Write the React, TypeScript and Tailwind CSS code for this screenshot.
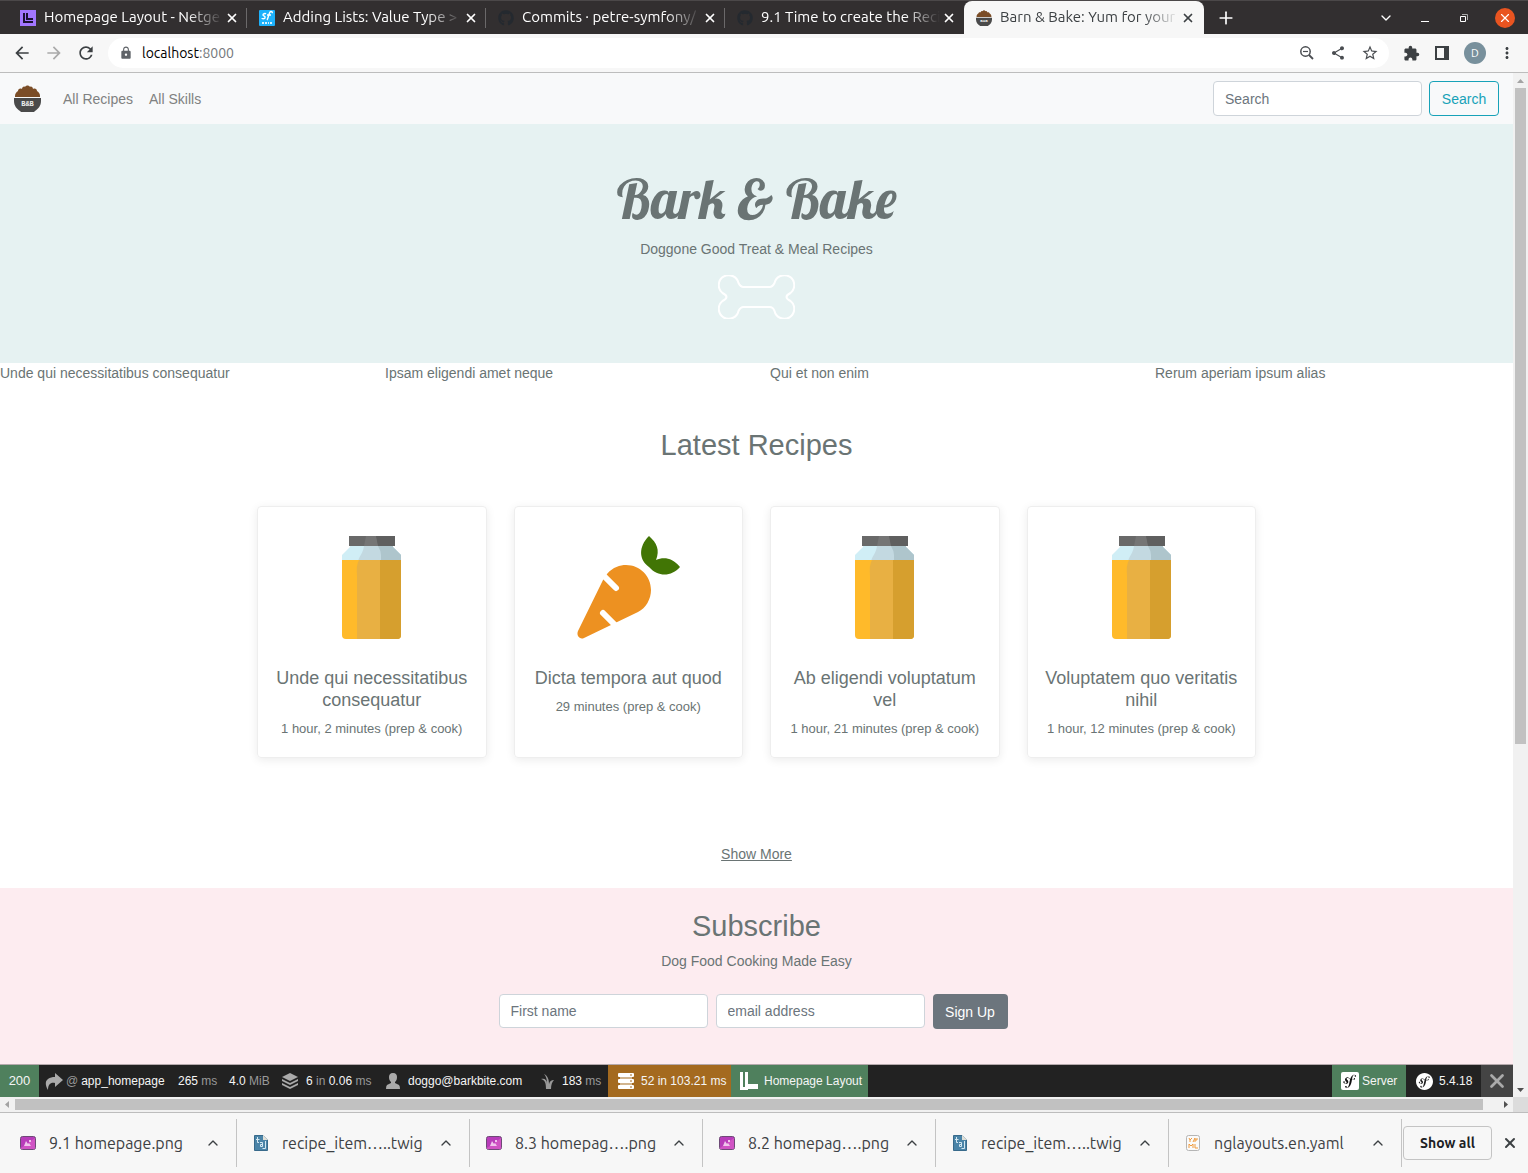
import type { ReactNode } from "react";
import {
  MdArrowBack,
  MdArrowForward,
  MdExtension,
  MdLock,
  MdMoreVert,
  MdRefresh,
  MdShare,
  MdStarBorder,
} from "react-icons/md";
import { FaGithub } from "react-icons/fa";
import { SiSymfony } from "react-icons/si";
import { ChevronDown, ChevronUp, Plus, X } from "lucide-react";

function BowlIcon({ className }: { className: string }) {
  return (
    <svg viewBox="0 0 27 27" className={className} aria-hidden="true">
      <path
        d="M1 11C1 9 2 7 4 6C4 4 6 3 8 4C8 2 10 1 11 2C12 0 15 0 16 2C17 1 19 2 19 4C21 3 23 4 23 6C25 7 26 9 26 11V12H1Z"
        fill="#7b4d27"
      />
      <path d="M0 13H27V16C27 21 24 24 21 26L20 27H7L6 26C3 24 0 21 0 16Z" fill="#4a4a4a" />
      <text
        x="13.5"
        y="21"
        textAnchor="middle"
        fontSize="7"
        fontWeight="700"
        fontFamily="Liberation Mono, monospace"
        fill="#eee"
      >
        B&amp;B
      </text>
    </svg>
  );
}

function LayoutsIcon() {
  return (
    <svg viewBox="0 0 16 16" className="size-4 shrink-0" aria-hidden="true">
      <rect width="16" height="16" fill="#a276ff" />
      <path d="M3 3H5V11H13V13H3Z M6 3H8V8H13V10H6Z" fill="#1b1033" />
    </svg>
  );
}

function CastsIcon() {
  return (
    <svg viewBox="0 0 16 16" className="size-4 shrink-0" aria-hidden="true">
      <rect width="16" height="16" rx="1" fill="#1db1fb" />
      <path
        d="M7 4C6 3 4 4 4 5C4 6 7 6 6 8C5 9 3 9 3 8M8 10C9 9 10 3 11 2C12 1 14 2 13 3M8 5H12"
        fill="none"
        stroke="#fff"
        strokeWidth="1.4"
      />
      <path d="M3 13H5M6 13H8M9 13H10M11 13H13" stroke="#d5f1ff" strokeWidth="2" />
    </svg>
  );
}

function ZoomOutIcon() {
  return (
    <svg viewBox="0 0 16 16" className="size-4" fill="none" stroke="currentColor" aria-hidden="true">
      <circle cx="6.500" cy="6.500" r="4.700" strokeWidth="1.5" />
      <path d="M4 6.500H9" strokeWidth="1.2" />
      <path d="M10 10L14 14" strokeWidth="1.8" />
    </svg>
  );
}

function JarIcon() {
  return (
    <svg viewBox="0 0 59 103" className="h-[103px] w-[59px]" aria-hidden="true">
      <path d="M8 10H51V11L59 19V25H0V19L8 11Z" fill="#d0eef6" />
      <path d="M22 10H51V11L59 19V25H16C18 19 21 17 22 10Z" fill="#c3d9e1" />
      <path d="M36 10H51V11L59 19V25H39V19Q39 15 36 10Z" fill="#aec5cc" />
      <path d="M0 24H59V99Q59 103 55 103H4Q0 103 0 99Z" fill="#ffba2a" />
      <path d="M17 24H59V99Q59 103 55 103H15V40Q14 29 17 24Z" fill="#e8b043" />
      <path d="M38 24H59V99Q59 103 55 103H38Z" fill="#d69f2e" />
      <path d="M7 0H53V10H7Z" fill="#696969" />
      <path d="M24 0H53V10H22Z" fill="#757575" />
      <path d="M34 0H53V10H36Z" fill="#5f5f5f" />
    </svg>
  );
}

function CarrotIcon() {
  return (
    <svg viewBox="0 0 103 103" className="size-[103px]" aria-hidden="true">
      <path
        d="M30 38C36 31 43 29 49 29C63 29 74 40 74 54C74 63 69 72 61 76L7 102C3 104 -1 100 1 95L26 44Z"
        fill="#ed9121"
      />
      <path d="M26 39L39 52M26 77L38 89" stroke="#fff" strokeWidth="6" strokeLinecap="round" />
      <path
        d="M72 0C61 11 62 24 72 31C82 42 95 40 103 31C95 21 86 21 79 24C83 14 80 7 72 0Z"
        fill="#417505"
      />
    </svg>
  );
}

function BoneIcon() {
  return (
    <svg viewBox="0 0 76 44" className="h-11 w-[77px]" aria-hidden="true">
      <path
        d="M25 12H51C54 12 55 10 56 8A10 10 0 1 1 72 18Q68 20 68 22Q68 24 72 26A10 10 0 1 1 56 36C55 33 54 32 51 32H25C22 32 21 34 20 36A10 10 0 1 1 4 26Q8 24 8 22Q8 20 4 18A10 10 0 1 1 20 8C21 10 22 12 25 12Z"
        fill="none"
        stroke="#fff"
        strokeWidth="2"
      />
    </svg>
  );
}

function GithubIcon() {
  return <FaGithub className="size-4 shrink-0 text-[#24292f]" />;
}

const tabs: { title: string; icon: ReactNode }[] = [
  { title: "Homepage Layout - Netge", icon: <LayoutsIcon /> },
  { title: "Adding Lists: Value Type >", icon: <CastsIcon /> },
  { title: "Commits · petre-symfony/", icon: <GithubIcon /> },
  { title: "9.1 Time to create the Reci", icon: <GithubIcon /> },
  { title: "Barn & Bake: Yum for your", icon: <BowlIcon className="size-4 shrink-0" /> },
];

function TabStrip() {
  return (
    <header className="flex h-[34px] shrink-0 border-t border-[#4b4849] bg-[#322f30] pl-2 text-white">
      {tabs.map((tab, i) => {
        const active = i === 4;
        return (
          <div
            key={tab.title}
            className={
              active
                ? "flex w-60 items-center rounded-t-lg bg-[#f7f7f7] pl-3 text-[#3c4043]"
                : "flex w-[239px] items-center pl-3"
            }
          >
            {tab.icon}
            <span className="ml-2 w-[179px] overflow-hidden whitespace-nowrap text-[15px] [mask-image:linear-gradient(to_right,black_80%,transparent)]">
              {tab.title}
            </span>
            <button aria-label={`Close ${tab.title}`} className="ml-0.5">
              <X className="size-3.5" strokeWidth={3} />
            </button>
            {i < 3 && <span className="ml-auto h-5 w-px bg-[#6b696a]" />}
          </div>
        );
      })}
      <button aria-label="New tab" className="ml-3">
        <Plus className="size-5" />
      </button>
      <div className="ml-auto flex items-center gap-[27px] pr-[13px]">
        <button aria-label="Search tabs">
          <ChevronDown className="size-4" />
        </button>
        <button aria-label="Minimize" className="flex h-2 w-2 items-end">
          <span className="h-px w-2 bg-white" />
        </button>
        <button aria-label="Restore" className="pl-1">
          <svg viewBox="0 0 8 8" className="size-2" aria-hidden="true">
            <path d="M0.5 2.5H5.5V7.5H0.5Z" fill="none" stroke="#fff" />
            <path d="M2 0.5H7.5V6" fill="none" stroke="#aaa" />
          </svg>
        </button>
        <button
          aria-label="Close window"
          className="flex size-5 items-center justify-center rounded-full bg-[#e95420]"
        >
          <X className="size-3.5" />
        </button>
      </div>
    </header>
  );
}

function AddressBar() {
  return (
    <div className="flex h-[39px] shrink-0 items-center border-b border-[#bdbdbd] bg-[#f7f7f7] pl-3 text-[#3c4043]">
      <div className="flex gap-3">
        <button aria-label="Back">
          <MdArrowBack className="size-5" />
        </button>
        <button aria-label="Forward" className="text-[#aaaaaa]">
          <MdArrowForward className="size-5" />
        </button>
        <button aria-label="Reload">
          <MdRefresh className="size-5" />
        </button>
      </div>
      <div className="ml-3 flex h-[30px] flex-1 items-center rounded-full bg-white pr-2.5 pl-[11px]">
        <MdLock className="size-3.5 text-[#5f6368]" />
        <a href="#address" className="ml-[9px] text-[14px] text-black">
          localhost<span className="text-[#74787c]">:8000</span>
        </a>
        <div className="ml-auto flex items-center gap-[15px] text-[#4a4d51]">
          <button aria-label="Zoom">
            <ZoomOutIcon />
          </button>
          <button aria-label="Share">
            <MdShare className="size-4" />
          </button>
          <button aria-label="Bookmark">
            <MdStarBorder className="size-[18px]" />
          </button>
        </div>
      </div>
      <div className="flex items-center gap-3 pr-3 pl-3.5">
        <button aria-label="Extensions">
          <MdExtension className="size-[17px]" />
        </button>
        <button aria-label="Side panel" className="px-[3px]">
          <svg viewBox="0 0 14 14" className="size-3.5" aria-hidden="true">
            <path d="M0 0H14V14H0ZM2 2V12H9V2Z" fill="#3c4043" fillRule="evenodd" />
          </svg>
        </button>
        <button
          aria-label="Profile"
          className="flex size-[22px] items-center justify-center rounded-full bg-[#78909c] text-[11px] text-white"
        >
          D
        </button>
        <button aria-label="Menu">
          <MdMoreVert className="size-[18px]" />
        </button>
      </div>
    </div>
  );
}

const highlights = [
  "Unde qui necessitatibus consequatur",
  "Ipsam eligendi amet neque",
  "Qui et non enim",
  "Rerum aperiam ipsum alias",
];

const recipes = [
  { name: "Unde qui necessitatibus consequatur", time: "1 hour, 2 minutes", carrot: false },
  { name: "Dicta tempora aut quod", time: "29 minutes", carrot: true },
  { name: "Ab eligendi voluptatum vel", time: "1 hour, 21 minutes", carrot: false },
  { name: "Voluptatem quo veritatis nihil", time: "1 hour, 12 minutes", carrot: false },
];

const inputClass =
  "w-[209px] rounded border border-[#ced4da] bg-white px-[11px] text-[14px] text-[#495057] placeholder:text-[#6c757d]";

function Site() {
  return (
    <div className="flex min-h-0 flex-1 flex-col overflow-hidden bg-white text-[14px] leading-[22px] text-[#6a7474]">
      <nav className="flex h-[51px] shrink-0 items-center bg-[#f8f9fa] px-3.5 text-[#808181]">
        <a href="#home" aria-label="Bark & Bake home">
          <BowlIcon className="size-[27px]" />
        </a>
        <a href="#recipes" className="ml-[22px]">
          All Recipes
        </a>
        <a href="#skills" className="ml-4">
          All Skills
        </a>
        <form className="ml-auto flex gap-[7px]">
          <input type="search" aria-label="Search" placeholder="Search" className={`${inputClass} h-[35px]`} />
          <button
            type="button"
            className="h-[35px] w-[70px] rounded border border-[#17a2b8] text-[14px] text-[#17a2b8]"
          >
            Search
          </button>
        </form>
      </nav>

      <section className="flex shrink-0 flex-col items-center bg-[#e6f2f2] pt-[43px] pb-11">
        <h1 className="font-[Lobster,'Liberation_Serif',serif] text-[54px] leading-[64px] font-normal">
          Bark &amp; Bake
        </h1>
        <p className="mt-[7px] mb-[15px]">Doggone Good Treat &amp; Meal Recipes</p>
        <BoneIcon />
      </section>

      <div className="-mr-[27px] grid shrink-0 grid-cols-4 leading-[21px]">
        {highlights.map((item) => (
          <div key={item}>{item}</div>
        ))}
      </div>

      <section className="shrink-0 text-center">
        <h2 className="mt-11 text-[29px] leading-[35px]">Latest Recipes</h2>
        <div className="mx-auto mt-[43px] grid max-w-[999px] grid-cols-4 gap-[27px]">
          {recipes.map((recipe) => (
            <a
              key={recipe.name}
              href="#recipe"
              className="flex flex-col items-center rounded border border-[#eeeeee] px-3 pt-[29px] pb-[18px] shadow-[0_2px_10px_rgba(0,0,0,0.08)]"
            >
              {recipe.carrot ? <CarrotIcon /> : <JarIcon />}
              <h3 className="mt-7 text-[18px] leading-[22px]">{recipe.name}</h3>
              <p className="mt-2 text-[13px] leading-5">{recipe.time} (prep &amp; cook)</p>
            </a>
          ))}
        </div>
        <a href="#more" className="mt-[85px] mb-[23px] inline-block underline">
          Show More
        </a>
      </section>

      <section className="flex flex-1 shrink-0 flex-col items-center bg-[#fdecf0] pt-5">
        <h2 className="text-[29px] leading-9">Subscribe</h2>
        <p className="mt-1.5">Dog Food Cooking Made Easy</p>
        <form className="mt-[22px] mr-[7px] flex gap-2">
          <input aria-label="First name" placeholder="First name" className={`${inputClass} h-[34px]`} />
          <input type="email" aria-label="email address" placeholder="email address" className={`${inputClass} h-[34px]`} />
          <button type="button" className="h-[35px] w-[75px] rounded bg-[#6c757d] text-[14px] text-white">
            Sign Up
          </button>
        </form>
      </section>
    </div>
  );
}

function Dim({ children }: { children: ReactNode }) {
  return <span className="text-[#999999]">{children}</span>;
}

function DebugToolbar() {
  return (
    <footer className="flex h-[33px] shrink-0 items-stretch border-t border-[#b5a9ac] bg-[#222222] text-[12px] whitespace-nowrap text-[#f5f5f5]">
      <a href="#status" className="flex w-[39px] items-center justify-center bg-[#4f805d] text-[13px]">
        200
      </a>
      <a href="#route" className="flex w-[139px] items-center gap-[3px] pl-1.5">
        <svg viewBox="0 0 18 18" className="size-[18px]" aria-hidden="true">
          <path d="M10 1L18 8L10 15V11C6 10 3 12 3 18C-2 10 2 5 10 5Z" fill="#aaa" />
        </svg>
        <Dim>@</Dim>
        <span>app_homepage</span>
      </a>
      <a href="#time" className="flex w-[51px] items-center">
        <span>
          265 <Dim>ms</Dim>
        </span>
      </a>
      <a href="#memory" className="flex w-[53px] items-center">
        <span>
          4.0 <Dim>MiB</Dim>
        </span>
      </a>
      <a href="#cache" className="flex w-[104px] items-center gap-2">
        <svg viewBox="0 0 16 16" className="size-4" aria-hidden="true">
          <path d="M8 0L16 4L8 8L0 4Z" fill="#aaa" />
          <path d="M0 6L8 10L16 6V8L8 12L0 8ZM0 10L8 14L16 10V12L8 16L0 12Z" fill="#aaa" />
        </svg>
        <span>
          6 <Dim>in</Dim> 0.06 <Dim>ms</Dim>
        </span>
      </a>
      <a href="#user" className="flex w-[155px] items-center gap-2">
        <svg viewBox="0 0 14 16" className="h-4 w-3.5" aria-hidden="true">
          <path
            d="M7 0C4 0 3 2 3 4C3 7 4 8 5 9V10L1 12Q0 13 0 16H14Q14 13 13 12L9 10V9C10 8 11 7 11 4C11 2 10 0 7 0Z"
            fill="#aaa"
          />
        </svg>
        <span>doggo@barkbite.com</span>
      </a>
      <a href="#twig" className="flex w-[67px] items-center gap-2">
        <svg viewBox="0 0 13 16" className="h-4 w-[13px]" aria-hidden="true">
          <path
            d="M5 16C5 10 4 7 0 6C4 5 6 7 6 11C6 6 5 3 3 1C7 3 8 7 8 11C9 8 10 7 13 7C11 9 10 12 10 16Z"
            fill="#999"
          />
        </svg>
        <span>
          183 <Dim>ms</Dim>
        </span>
      </a>
      <a href="#database" className="flex w-[123px] items-center gap-[7px] bg-[#a46a1f] pl-2.5">
        <svg viewBox="0 0 16 16" className="size-4" aria-hidden="true">
          <path
            d="M1 0H15Q16 0 16 1V3Q16 4 15 4H1Q0 4 0 3V1Q0 0 1 0ZM1 6H15Q16 6 16 7V9Q16 10 15 10H1Q0 10 0 9V7Q0 6 1 6ZM1 12H15Q16 12 16 13V15Q16 16 15 16H1Q0 16 0 15V13Q0 12 1 12Z"
            fill="#fff"
          />
          <path d="M2 5H14M2 11H14" stroke="#fff" />
          <path d="M12 2H14M12 8H14M12 14H14" stroke="#a46a1f" />
        </svg>
        <span>52 in 103.21 ms</span>
      </a>
      <a href="#layout" className="flex w-[137px] items-center gap-1.5 bg-[#4f805d] pl-[9px]">
        <svg viewBox="0 0 18 18" className="size-[18px]" aria-hidden="true">
          <path d="M0 0H3V15H8V18H0ZM5 0H8V12H18V17H5Z" fill="#fff" />
        </svg>
        <span>Homepage Layout</span>
      </a>
      <a href="#server" className="ml-auto flex w-[74px] items-center gap-[3px] bg-[#4f805d] pl-[9px]">
        <svg viewBox="0 0 18 18" className="size-[18px]" aria-hidden="true">
          <rect width="18" height="18" rx="2" fill="#fff" />
          <circle cx="9" cy="9" r="8" fill="#111" />
          <SiSymfony x="-1" y="-1" size={20} color="#fff" />
        </svg>
        <span>Server</span>
      </a>
      <a href="#version" className="flex w-[75px] items-center gap-1.5 pl-2.5">
        <SiSymfony className="size-[17px] text-white" />
        <span>5.4.18</span>
      </a>
      <button aria-label="Close toolbar" className="flex w-8 items-center justify-center bg-[#444444] text-[#aaaaaa]">
        <X className="size-[22px]" strokeWidth={3} />
      </button>
    </footer>
  );
}

function Arrow({ d, color }: { d: string; color: string }) {
  return (
    <svg viewBox="0 0 15 15" className="size-[15px] shrink-0" aria-hidden="true">
      <path d={d} fill={color} />
    </svg>
  );
}

function PngIcon() {
  return (
    <svg viewBox="0 0 16 14" className="h-3.5 w-4 shrink-0" aria-hidden="true">
      <rect x="0.5" y="0.5" width="15" height="13" rx="2" fill="#b83cba" stroke="#6d4a76" />
      <path d="M1 12L15 2V12Q15 13 14 13H1Z" fill="#d053c4" />
      <path d="M4 10L6 5L8 8L9 7L11 10ZM9 4H11V6H9Z" fill="#f0c4ec" />
    </svg>
  );
}

function TwigIcon() {
  return (
    <svg viewBox="0 0 14 16" className="mx-px h-4 w-3.5 shrink-0" aria-hidden="true">
      <path d="M0.5 0.5H9L13.5 5V15.5H0.5Z" fill="#4a84a8" stroke="#386a8b" />
      <path d="M9 0L14 5H9Z" fill="#e0e0d8" />
      <path d="M3.5 2V7.5H5M2 4.5H5.5M6 7.5H8.500V11.500H6.500V9.500H8.500M11.500 6V13.500H8.500" fill="none" stroke="#d4e8f2" />
    </svg>
  );
}

function YamlIcon() {
  return (
    <svg viewBox="0 0 14 16" className="mx-px h-4 w-3.5 shrink-0" aria-hidden="true">
      <rect x="0.5" y="0.5" width="13" height="15" rx="2" fill="#fafafa" stroke="#b5b5b5" />
      <path
        d="M3 3L4 5L6 3M4 5V7M7 7L9 3V7M9 5H11V3M3 13V9L5 11L7 9V13M9 9V13H12"
        fill="none"
        stroke="#ef9a3d"
      />
    </svg>
  );
}

const downloads: { name: string; icon: ReactNode }[] = [
  { name: "9.1 homepage.png", icon: <PngIcon /> },
  { name: "recipe_item…..twig", icon: <TwigIcon /> },
  { name: "8.3 homepag….png", icon: <PngIcon /> },
  { name: "8.2 homepag….png", icon: <PngIcon /> },
  { name: "recipe_item…..twig", icon: <TwigIcon /> },
  { name: "nglayouts.en.yaml", icon: <YamlIcon /> },
];

function DownloadBar() {
  return (
    <div className="flex h-[61px] shrink-0 items-center border-t border-[#bdbdbd] bg-[#f7f7f7] pl-1 text-[#3c4043]">
      {downloads.map((file, i) => (
        <div key={i} className="flex h-12 w-[233px] items-center border-r border-[#c4c4c4] pr-[15px] pl-4">
          {file.icon}
          <a href="#file" className="ml-[13px] text-[16px] whitespace-nowrap">
            {file.name}
          </a>
          <button aria-label={`Options for ${file.name}`} className="ml-auto">
            <ChevronUp className="size-4" />
          </button>
        </div>
      ))}
      <button className="ml-px h-[34px] w-[89px] rounded border border-[#c4c4c4] text-[14px] font-bold text-[#202124]">
        Show all
      </button>
      <button aria-label="Close downloads" className="ml-auto pr-2.5">
        <X className="size-4" strokeWidth={3} />
      </button>
    </div>
  );
}

export default function App() {
  return (
    <div className="flex h-screen flex-col overflow-hidden font-[Ubuntu,'Noto_Sans',sans-serif]">
      <TabStrip />
      <AddressBar />
      <div className="flex min-h-0 flex-1">
        <main className="flex min-w-0 flex-1 flex-col font-['Liberation_Sans',Arial,sans-serif]">
          <Site />
          <DebugToolbar />
        </main>
        <div className="flex w-[15px] flex-col bg-[#f1f1f1]">
          <Arrow d="M4 10H11L7.500 6Z" color="#a3a3a3" />
          <div className="flex-1 px-0.5">
            <div className="h-[66%] bg-[#c1c1c1]" />
          </div>
          <Arrow d="M4 6H11L7.500 10Z" color="#505050" />
        </div>
      </div>
      <div className="flex h-[15px] shrink-0 bg-[#f1f1f1]">
        <Arrow d="M9 4V11L5 7.500Z" color="#a3a3a3" />
        <div className="flex-1 py-0.5">
          <div className="h-full w-[99%] bg-[#c1c1c1]" />
        </div>
        <Arrow d="M6 4V11L10 7.500Z" color="#505050" />
        <div className="w-[15px] bg-[#dcdcdc]" />
      </div>
      <DownloadBar />
    </div>
  );
}
